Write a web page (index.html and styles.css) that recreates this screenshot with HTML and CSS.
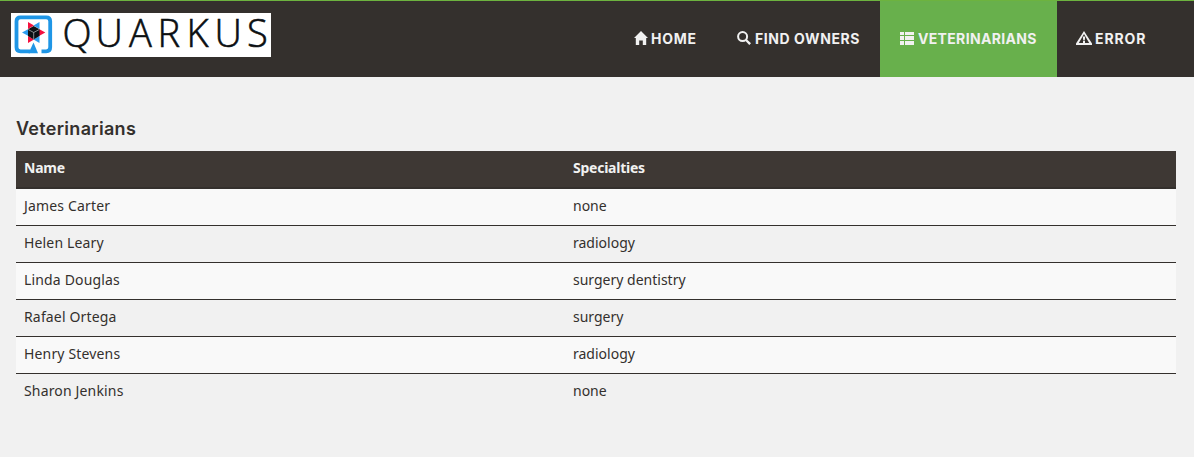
FILE: index.html
```html
<!DOCTYPE html>
<html lang="en">
<head>
<meta charset="utf-8">
<title>Veterinarians</title>
<link rel="stylesheet" href="styles.css">
</head>
<body>
<header class="navbar">
  <a class="brand" href="#">
    <svg width="260" height="44" viewBox="0 0 260 44">
      <path d="M19 38.300H9.500Q5.500 38.300 5.500 34.300V8.300Q5.500 4.300 9.500 4.300H35.200Q39.200 4.300 39.200 8.300V34.300Q39.200 38.300 35.200 38.300H30.500" fill="none" stroke="#1f96e6" stroke-width="3.800"/>
      <path d="M22.500 29.500L27 40.200H17.500Z" fill="#1f96e6"/>
      <path d="M17 9L23 12.500L17 16ZM34.300 19.500L28 23V16ZM17 30V23L23 26.500Z" fill="#f5113f"/>
      <path d="M28.500 9V16L22.500 12.500ZM11 19.500L17.500 16V23ZM28.500 30L22.500 26.500L28.500 23Z" fill="#2c9df0"/>
      <path d="M22.700 13L28.500 16.300V23L22.700 26.500L17 23V16.300Z" fill="#0c1014"/>
      <path d="M17.200 16.500L22.700 19.500L28.300 16.500M22.700 19.500V26.500" fill="none" stroke="#d7dadd" stroke-width=".6"/>
      <text class="wordmark" y="34" x="51.500 84.500 118 146.500 175.500 203.500 236">QUARKUS</text>
    </svg>
  </a>
  <nav class="menu">
    <a class="item home" href="#"><svg width="14" height="14" viewBox="0 0 14 14"><path d="M7 0L14 7H12.200V14H8.800V9.500H5.200V14H1.800V7H0Z"/></svg><span>HOME</span></a>
    <a class="item find" href="#"><svg width="14" height="14" viewBox="0 0 14 14"><circle cx="5.600" cy="5.600" r="4.500" fill="none" stroke="#f1f1f1" stroke-width="2"/><path d="M8 9.500L9.500 8L14 12.300L12.300 14Z"/></svg><span>FIND OWNERS</span></a>
    <a class="item vets active" href="#"><svg width="14" height="14" viewBox="0 0 14 14"><path d="M0 1h4v3H0zM5 1h9v3H5zM0 5h4v4H0zM5 5h9v4H5zM0 10h4v4H0zM5 10h9v4H5z"/></svg><span>VETERINARIANS</span></a>
    <a class="item error" href="#"><svg width="16" height="14" viewBox="0 0 16 14"><path fill-rule="evenodd" d="M8 0L16 12.500V14H0V12.500ZM8 3L2.800 12H13.200Z"/><path d="M6.800 5.500H9.200L8.700 9.500H7.300ZM7 10h2v2H7z"/></svg><span>ERROR</span></a>
  </nav>
</header>
<main class="content">
  <h2 class="title">Veterinarians</h2>
  <table class="vets-table">
    <thead><tr><th class="name">Name</th><th>Specialties</th></tr></thead>
    <tbody>
      <tr><td>James Carter</td><td>none</td></tr>
      <tr><td>Helen Leary</td><td>radiology</td></tr>
      <tr><td>Linda Douglas</td><td>surgery dentistry</td></tr>
      <tr><td>Rafael Ortega</td><td>surgery</td></tr>
      <tr><td>Henry Stevens</td><td>radiology</td></tr>
      <tr><td>Sharon Jenkins</td><td>none</td></tr>
    </tbody>
  </table>
</main>
</body>
</html>
```
FILE: styles.css
```css
* { box-sizing: border-box; }
body {
  margin: 0;
  min-height: 457px;
  background: #f1f1f1;
  color: #34302d;
  font: 14px/20px "Noto Sans", "Open Sans", sans-serif;
}
.navbar {
  display: flex;
  justify-content: space-between;
  height: 77px;
  border-top: 1px solid #6db33f;
  background: #34302d;
  padding-right: 28px;
}
.brand {
  width: 260px;
  height: 44px;
  margin: 12px 0 0 11px;
  background: #fff;
}
.brand svg { display: block; overflow: visible; }
.wordmark {
  font-family: "Open Sans", sans-serif;
  font-weight: 300;
  font-size: 38px;
  fill: #0b0f12;
  stroke: #0b0f12;
  stroke-width: .6px;
}
.menu { display: flex; }
.item {
  display: flex;
  align-items: center;
  height: 76px;
  padding: 0 0 1px 20px;
  color: #f1f1f1;
  font: 700 14px/20px Inter, sans-serif;
  text-decoration: none;
  white-space: nowrap;
}
.item svg { flex: none; margin: -2px 4px 0 0; fill: #f1f1f1; }
.home { width: 103px; letter-spacing: .75px; }
.home svg { margin-right: 3px; }
.find { width: 163px; letter-spacing: .57px; }
.vets { width: 177px; letter-spacing: .33px; }
.error { width: 109px; padding-left: 19px; letter-spacing: .9px; }
.error svg { margin-right: 3px; }
.active { background: #68b04c; }
.content { padding: 42px 18px 0 16px; }
.title {
  margin: 0 0 12px;
  font: 600 18px/20px Inter, sans-serif;
  letter-spacing: .3px;
}
.vets-table {
  width: 1160px;
  border-spacing: 0;
  table-layout: fixed;
}
th, td { padding: 0 8px 2px; text-align: left; height: 37px; }
td:first-child { letter-spacing: .16px; }
th {
  height: 38px;
  background: #3e3834;
  border-bottom: 2px solid #34302d;
  color: #f1f1f1;
  font-weight: 700;
  letter-spacing: -.25px;
}
.name { width: 549px; }
td { border-top: 1px solid #34302d; }
tbody tr:first-child td { height: 36px; border-top: 0; }
tbody tr:nth-child(odd) { background: #f9f9f9; }
```
